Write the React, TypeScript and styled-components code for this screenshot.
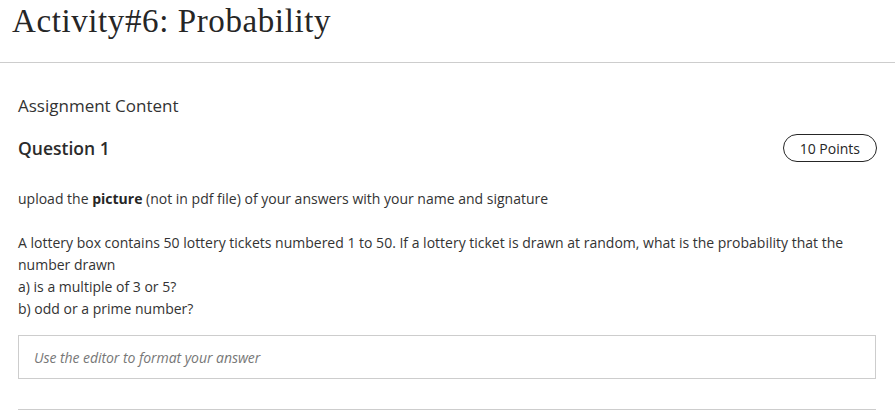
import React from "react";
import styled, { createGlobalStyle } from "styled-components";

const GlobalStyle = createGlobalStyle`
  html, body {
    margin: 0;
    padding: 0;
    background: #fff;
  }
  body {
    font-family: "Open Sans", "Liberation Sans", sans-serif;
    color: #333;
  }
`;

const Page = styled.div`
  width: 895px;
  display: flex;
  flex-direction: column;
`;

const Header = styled.header`
  height: 63px;
  border-bottom: 1px solid #cdcdcd;
  padding: 0 12px;
  box-sizing: border-box;
`;

const Title = styled.h1`
  margin: 0;
  padding-top: 1px;
  font-family: "Liberation Serif", serif;
  font-weight: 400;
  font-size: 33px;
  letter-spacing: 0.6px;
  line-height: 40px;
  color: #262626;
`;

const Content = styled.main`
  padding: 31px 19px 0 18px;
  display: flex;
  flex-direction: column;
`;

const SectionTitle = styled.h2`
  margin: 0;
  font-size: 17px;
  font-weight: 400;
  line-height: 24px;
  color: #333;
`;

const QuestionRow = styled.div`
  margin-top: 16px;
  display: flex;
  align-items: center;
  justify-content: space-between;
`;

const QuestionTitle = styled.h3`
  margin: 0;
  font-size: 17.5px;
  font-weight: 600;
  line-height: 24px;
  color: #2b2b2b;
`;

const PointsPill = styled.span`
  box-sizing: border-box;
  height: 28px;
  padding: 0 16px;
  display: inline-flex;
  align-items: center;
  border: 1px solid #262626;
  border-radius: 14px;
  font-size: 14px;
  font-weight: 500;
  color: #262626;
  margin-right: -1px;
`;

const Prompt = styled.div`
  margin-top: 26px;
  font-size: 14px;
  line-height: 22px;
  color: #333;

  & p {
    margin: 0 0 22px;
  }
  & p:last-child {
    margin-bottom: 0;
  }
  & strong {
    font-weight: 700;
    color: #262626;
  }
`;

const AnswerBox = styled.div`
  box-sizing: border-box;
  margin-top: 15px;
  height: 44px;
  border: 1px solid #cdcdcd;
  padding: 0 15px;
  display: flex;
  align-items: center;
`;

const Placeholder = styled.span`
  font-style: italic;
  font-size: 14px;
  letter-spacing: -0.05px;
  color: #777;
`;

const Divider = styled.hr`
  margin: 30px 0 0;
  border: 0;
  border-top: 1px solid #cdcdcd;
`;

export default function App() {
  return (
    <>
      <GlobalStyle />
      <Page>
        <Header>
          <Title>Activity#6: Probability</Title>
        </Header>
        <Content>
          <SectionTitle>Assignment Content</SectionTitle>
          <QuestionRow>
            <QuestionTitle>Question 1</QuestionTitle>
            <PointsPill>10 Points</PointsPill>
          </QuestionRow>
          <Prompt>
            <p>
              upload the <strong>picture</strong> (not in pdf file) of your
              answers with your name and signature
            </p>
            <p>
              A lottery box contains 50 lottery tickets numbered 1 to 50. If a
              lottery ticket is drawn at random, what is the probability that
              the number drawn
              <br />
              a) is a multiple of 3 or 5?
              <br />
              b) odd or a prime number?
            </p>
          </Prompt>
          <AnswerBox>
            <Placeholder>Use the editor to format your answer</Placeholder>
          </AnswerBox>
          <Divider />
        </Content>
      </Page>
    </>
  );
}
